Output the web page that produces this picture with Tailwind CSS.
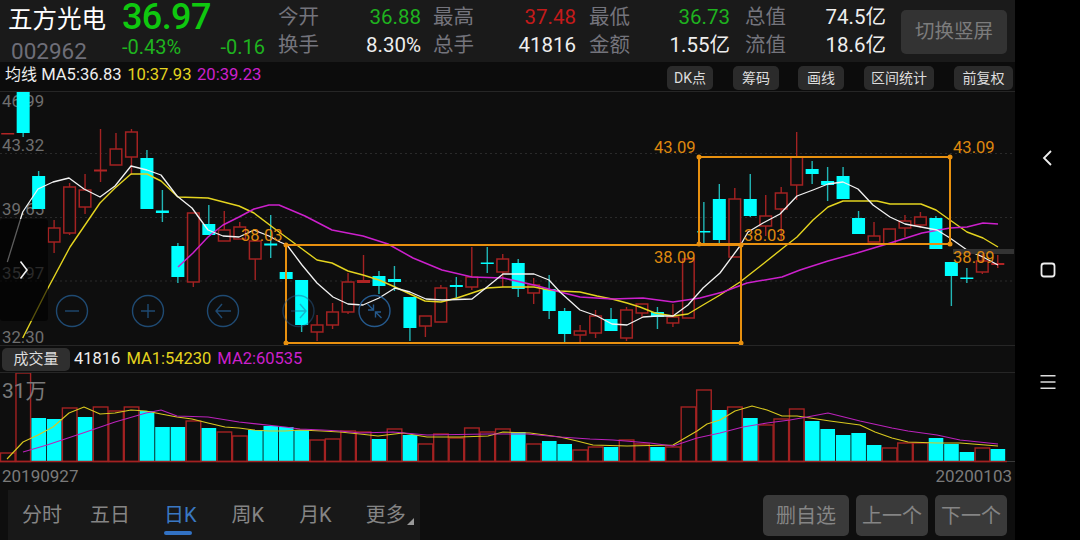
<!DOCTYPE html>
<html lang="zh">
<head>
<meta charset="utf-8">
<script src="https://cdn.jsdelivr.net/npm/@tailwindcss/browser@4"></script>
</head>
<body class="bg-black">
<div class="flex w-[1080px] h-[540px] overflow-hidden font-['Roboto','Noto_Sans_CJK_SC',sans-serif]">
  <main class="w-[1015px] h-full flex flex-col bg-[#0e0e0e]">
    <header class="h-[62px] shrink-0 bg-[#1a1a1a] flex text-[20.5px] leading-none">
      <div class="w-[110px] pl-[8px] pt-[7px]">
        <div class="text-[24.5px] leading-[26px] text-white whitespace-nowrap">五方光电</div>
        <div class="text-[22.5px] leading-[26px] mt-[5px] pl-[3px] text-[#6e6e78]">002962</div>
      </div>
      <div class="w-[158px] pl-[12px] text-[#12c012]">
        <div class="text-[36px] leading-[34px] font-medium tracking-[-0.6px] text-[#0fc80f]">36.97</div>
        <div class="flex justify-between w-[143px] mt-[3px] text-[20px] leading-[20px] text-[#1fb31f]"><span>-0.43%</span><span>-0.16</span></div>
      </div>
      <div class="w-[143px] ml-[10px] pt-[7px] grid grid-cols-[auto_1fr] auto-rows-[28px] text-right">
        <span class="text-left text-[#74747c]">今开</span><span class="text-[#1fb31f]">36.88</span>
        <span class="text-left text-[#74747c]">换手</span><span class="text-[#eeeeee]">8.30%</span>
      </div>
      <div class="w-[143px] ml-[12px] pt-[7px] grid grid-cols-[auto_1fr] auto-rows-[28px] text-right">
        <span class="text-left text-[#74747c]">最高</span><span class="text-[#c41a1a]">37.48</span>
        <span class="text-left text-[#74747c]">总手</span><span class="text-[#eeeeee]">41816</span>
      </div>
      <div class="w-[141px] ml-[13px] pt-[7px] grid grid-cols-[auto_1fr] auto-rows-[28px] text-right">
        <span class="text-left text-[#74747c]">最低</span><span class="text-[#1fb31f]">36.73</span>
        <span class="text-left text-[#74747c]">金额</span><span class="text-[#eeeeee]">1.55亿</span>
      </div>
      <div class="w-[141px] ml-[15px] pt-[7px] grid grid-cols-[auto_1fr] auto-rows-[28px] text-right">
        <span class="text-left text-[#74747c]">总值</span><span class="text-[#eeeeee]">74.5亿</span>
        <span class="text-left text-[#74747c]">流值</span><span class="text-[#eeeeee]">18.6亿</span>
      </div>
      <div class="w-[106px] h-[44px] mt-[10px] ml-[15px] rounded-[5px] bg-[#333333] text-[#7c7c7c] flex items-center justify-center text-[19.5px]">切换竖屏</div>
    </header>
    <div class="h-[30px] shrink-0 flex items-start justify-between border-b border-[#262626] bg-[#0c0c0c] pl-[5px] pr-[2px] text-[16.6px]">
      <div class="flex gap-[5.5px] leading-[22px] pt-[2px] whitespace-nowrap"><span class="text-[#eeeeee]"><span class="text-[16px]">均线</span> MA5:36.83</span><span class="text-[#e4d41f]">10:37.93</span><span class="text-[#cc20cc]">20:39.23</span></div>
      <div class="flex pt-[4px] text-[14px] text-[#dddddd]">
        <span class="w-[46px] h-[24px] ml-0 rounded-[5px] bg-[#2b2b2b] flex items-center justify-center">DK点</span>
        <span class="w-[46px] h-[24px] ml-[20px] rounded-[5px] bg-[#2b2b2b] flex items-center justify-center">筹码</span>
        <span class="w-[46px] h-[24px] ml-[19px] rounded-[5px] bg-[#2b2b2b] flex items-center justify-center">画线</span>
        <span class="w-[70px] h-[24px] ml-[20px] rounded-[5px] bg-[#2b2b2b] flex items-center justify-center">区间统计</span>
        <span class="w-[59px] h-[24px] ml-[20px] rounded-[5px] bg-[#2b2b2b] flex items-center justify-center">前复权</span>
      </div>
    </div>
    <svg id="k" class="block w-[1015px] h-[253px] shrink-0 overflow-visible" viewBox="0 92 1015 253" xmlns="http://www.w3.org/2000/svg"></svg>
    <div class="h-[28px] shrink-0 flex items-center gap-[6px] border-t border-b border-[#262626] bg-[#0e0e0e] pl-[2px] text-[16.5px] whitespace-nowrap">
      <span class="w-[68px] h-[23px] mr-[-2px] rounded-[5px] bg-[#2f2f2f] text-[#dddddd] text-[15px] flex items-center justify-center">成交量</span>
      <span class="text-[#eeeeee]">41816</span><span class="text-[#e4d41f]">MA1:54230</span><span class="text-[#cc20cc]">MA2:60535</span>
    </div>
    <svg id="v" class="block w-[1015px] h-[90px] shrink-0" viewBox="0 373 1015 90" xmlns="http://www.w3.org/2000/svg"></svg>
    <div class="h-[27px] shrink-0 flex items-center justify-between pl-[2px] pr-[3px] text-[17px] text-[#7a7a7a]"><span>20190927</span><span>20200103</span></div>
    <div class="h-[50px] shrink-0 flex justify-between text-[20px] text-[#858585]">
      <nav class="relative ml-[8px] w-[412px] h-full bg-[#181818] flex items-center">
        <span class="ml-[14px]">分时</span>
        <span class="ml-[28px]">五日</span>
        <span class="relative ml-[34px] text-[#3a78c3]">日K<i class="absolute left-0 top-[31px] w-[28px] h-[4px] rounded-full bg-[#3272c4]"></i></span>
        <span class="ml-[35px]">周K</span>
        <span class="ml-[35px]">月K</span>
        <span class="relative ml-[34px]">更多<svg class="absolute left-[41px] top-[18px] w-[7px] h-[7px]" viewBox="0 0 7 7"><path d="M7 0V7H0Z" fill="#999999"/></svg></span>
      </nav>
      <div class="flex gap-[7px] pt-[5px] pr-[8px]">
        <span class="w-[86px] h-[41px] rounded-[5px] bg-[#3a3a3a] flex items-center justify-center">删自选</span>
        <span class="w-[72px] h-[41px] rounded-[5px] bg-[#3a3a3a] flex items-center justify-center">上一个</span>
        <span class="w-[72px] h-[41px] rounded-[5px] bg-[#3a3a3a] flex items-center justify-center">下一个</span>
      </div>
    </div>
  </main>
  <aside class="w-[65px] h-full bg-black flex flex-col items-center justify-center gap-[92px]">
    <svg class="w-[20px] h-[20px]" viewBox="0 0 20 20"><path d="M13 3 6 10l7 7" fill="none" stroke="#eeeeee" stroke-width="1.8"/></svg>
    <svg class="w-[20px] h-[20px]" viewBox="0 0 20 20"><rect x="3.5" y="3.5" width="13" height="13" rx="2.5" fill="none" stroke="#eeeeee" stroke-width="1.8"/></svg>
    <svg class="w-[20px] h-[20px]" viewBox="0 0 20 20"><path d="M2.5 3.7h15M2.5 10h15M2.5 16.300h15" fill="none" stroke="#dddddd" stroke-width="1.6"/></svg>
  </aside>
</div>
<script>
const X=i=>7.7+15.47*i, R='#a32222', C='#00ffff', BG='#0e0e0e';
const K=[
['r',133,134.5,133,134.5],['c',92,133,92,137],['c',176,209,171,209],['r',228,242,220,253],['r',187,233,183,235],['r',190,207,174,214],['r',169.5,171.5,129,182],['r',149,165,133,165],['r',132,157,129,175],['c',158,209,150,209],
['c',210.5,213,190,222],['c',246,277,243,283],['r',213,282,213,287],['c',224,235,205,235],['r',230,241,211,241],['r',227,239,222,239],['r',241,259,241,280],['c',243.5,245.5,215,258],['c',272,279,266,279],['c',280,325,280,332],
['r',325,332,315,341],['r',312,325,303,329],['r',282,312,273,314],['r',280,283,255,283],['c',276,286,271,294],['c',279,282,266,291],['c',297,328,297,341],['r',316,326,316,337],['r',288,322,285,322],['c',285,287,277,298],
['r',277,287,247,290],['c',262.5,264,247,273],['r',259,272,254,287],['c',263,289,259,297],['r',285,293,278,304],['c',289,311,275,319],['c',311,334,308,343],['r',331,335,325,342],['r',316,333,310,338],['c',319,331,308,331],
['r',310,338,307,341],['r',304,313,304,318],['c',312,317,307,329],['r',317,323,304,327],['r',259,318,259,318],['c',231,232.5,202,244],['c',199,240,184,243],['r',199,257,188,257],['c',199,216,174,217],['r',216,226,195,236],
['r',193,209,187,240],['r',157,185,132,200],['c',169,174,161,184],['c',181,185,167,201],['c',176,199,167,199],['c',218,234,211,234],['r',236,242,222,242],['r',229,244,229,244],['r',221,228,215,237],['r',217,225,212,228],
['c',218,249,216,249],['c',262,276,262,306],['c',277.5,279,268,283],['r',261,272,252,274],['r',263,265,255,268]];
const V=[['r',453],['r',373],['c',418],['c',419],['r',408],['c',417],['r',407],['r',411],['r',407],['c',411],['c',427],['c',427],['r',421],['c',428],['r',432],['r',436],['c',430],['c',426],['c',427],['c',430],['r',440],['r',439],['r',431],['r',432],['c',439],['r',429],['c',435],['r',444],['r',434],['r',438],['r',428],['r',432],['r',429],['c',432],['r',444],['c',441],['c',444],['r',450],['r',447],['c',447],['r',440],['r',444],['c',447],['r',447],['r',407],['r',390],['c',410],['r',407],['c',418],['r',425],['r',419],['r',409],['c',421],['c',429],['c',435],['c',433],['c',445],['r',448],['r',443],['r',443],['c',438],['c',444],['c',452],['r',448],['c',449]];
const poly=(p,c,w)=>`<polyline points="${p}" fill="none" stroke="${c}" stroke-width="${w}" stroke-linejoin="round"/>`;
const yellow='22.7,338 47,290 70,247 85,225 100,203 115,188 131,174 147,174 161,181 178,197 208,198 239,206 254,213 279,232 290,240 317,260 332,263 348,271 363,275 379,280 395,287 410,294 425,301 441,302 457,298 472,293 487,288 503,287 518,287 534,287 549,290 560,291 580,292 597,296 612,299 627,303 640,307 655,313 673,316 688,314 703,305 720,295 740,282 763,264 783,248 797,237 813,220 828,207 843,201 860,201 877,201 890,204 921,204 936,210 950,220 967,232 983,238 998,247';
const white='7.3,262 22.7,212 38,189 53,182 69,178 84,189 100,197 115,186 131,166 147,170 161,175 177,196 192,208 208,230 223,236 239,237 254,230 269,236 280,242 287,245 302,265 317,283 333,297 348,304 363,305 379,298 395,288 410,292 426,299 442,300 472,299 487,287 503,274 534,274 549,280 560,292 580,310 597,316 612,324 627,325 643,317 657,316 673,316 688,305 703,288 720,273 740,246 748,232 763,223 780,214 797,196 813,190 828,184 843,182 858,189 873,205 890,217 905,224 921,227 937,230 950,238 967,250 983,257 998,265';
const mag='178,267 193,253 208,237 223,225 239,217 254,209 269,205 279,205 305,216 332,230 363,236 388,244 413,258 442,270 472,277 503,278 534,285 560,292 580,297 612,299 643,298 673,302 700,298 723,292 747,283 782,277 800,270 828,261 857,253 887,244 922,233 950,228 967,227 983,223 998,224';
let s='';
for(const y of [153.5,217.5,281]) s+=`<line x1="0" x2="1015" y1="${y}" y2="${y}" stroke="#2a2a2a" stroke-dasharray="2 3"/>`;
for(const [t,y] of [['46.99',107],['43.32',151],['39.65',215],['35.97',279],['32.30',343]]) s+=`<text x="2" y="${y}" font-size="16.8" fill="#6f6f6f">${t}</text>`;
K.forEach((k,i)=>{const x=X(i),[t,a,b,h,l]=k;
 if(h<a||l>b)s+=`<line x1="${x}" x2="${x}" y1="${h}" y2="${l}" stroke="${t=='r'?R:'#22b6b6'}" stroke-width="1.4"/>`;
 if(b-a<4) s+=`<rect x="${x-6.5}" y="${a}" width="13" height="${b-a}" fill="${t=='r'?'#b02424':C}"/>`;
 else if(t=='r') s+=`<rect x="${x-5.8}" y="${a}" width="11.6" height="${b-a}" fill="${BG}" stroke="${R}" stroke-width="1.5"/>`;
 else s+=`<rect x="${x-6.5}" y="${a}" width="13" height="${b-a}" fill="${C}"/>`;});
s+=poly(yellow,'#e4d41f',1.4)+poly(mag,'#cc20cc',1.5)+poly(white,'#f2f2f2',1.3);
s+=`<rect x="953" y="249" width="61" height="5" fill="#333333"/>`;
const O='#e8900f';
s+=`<path d="M286 343V245H741V343ZM699 244V157H950V244Z" fill="none" stroke="${O}" stroke-width="2"/>`;
for(const [x,y] of [[286,245],[741,245],[286,343],[741,343],[699,157],[950,157],[699,244],[950,244]]) s+=`<circle cx="${x}" cy="${y}" r="2.5" fill="${O}"/>`;
for(const [t,x,y] of [['38.03',241,241],['38.09',654,263],['43.09',654,153],['43.09',953,153],['38.03',744,241],['38.09',953,263]]) s+=`<text x="${x}" y="${y}" font-size="16.6" fill="${O}" opacity=".95">${t}</text>`;
s+=`<rect x="0" y="219" width="48" height="102" rx="3" fill="#000000" opacity=".62"/><path d="M20.5 261.5 27 270l-6.5 8.500" fill="none" stroke="#f0f0f0" stroke-width="1.6"/>`;
const B='#1f4a72';
const circ=(x,d,c=B,o=1)=>`<g opacity="${o}"><circle cx="${x}" cy="311" r="15.500" fill="none" stroke="${c}" stroke-width="1.4"/><path d="${d}" fill="none" stroke="${c}" stroke-width="1.4"/></g>`;
s+=circ(72,'M65 311h14')+circ(148,'M141 311h14M148 304v14')+circ(223,'M216 311h15M222 304l-6 7 6 7')+circ(298.5,'M291 311h15M300 304l6 7-6 7','#2a5f94',.45)+circ(374.5,'M367.500 304l6 6M373.500 304.500v5.500h-5.500M381.500 318l-6-6M375.500 317.500v-5.500h5.500','#25598c');
document.getElementById('k').innerHTML=s;
let v='';
V.forEach((b,i)=>{const x=15.47*i+.5,[t,y]=b;
 if(t=='c')v+=`<rect x="${x}" y="${y}" width="14.6" height="${461.5-y}" fill="${C}"/>`;
 else v+=`<rect x="${x}" y="${y}" width="14.6" height="${461.5-y}" fill="${BG}" stroke="${R}" stroke-width="1.400"/>`;});
v+=`<line x1="0" x2="1007" y1="461.500" y2="461.500" stroke="${R}" stroke-width="1.400"/><line x1="1007" x2="1015" y1="461.500" y2="461.500" stroke="#3a3a3a"/>`;
v+=`<text x="2" y="398" font-size="21" fill="#7a7a7a">31万</text>`;
v+=poly('7,459 23,442 38,435 53,427 69,413 84,407 100,414 115,413 131,410 146,411 161,414 177,417 192,419 208,423 225,427 239,428 254,430 269,431 285,431 300,430 322,431 340,432 360,434 378,436 403,433 427,437 460,437 488,436 503,432 530,433 560,437 577,441 593,445 627,446 673,445 697,431 707,424 720,420 735,411 752,406 767,410 782,416 797,416 830,421 860,425 875,432 892,438 908,442 937,443 960,443 998,446','#d9c81f',1.1);
v+=poly('23,452 47,445 83,433 115,422 146,413 161,410 177,416 208,417 239,422 285,427 300,429 322,430 340,431 360,433 393,432 427,435 488,434 527,434 560,437 590,439 613,440 650,443 673,446 697,438 720,433 743,427 767,423 790,420 807,417 828,413 860,421 892,428 908,431 937,435 960,440 998,444','#bb22bb',1.1);
document.getElementById('v').innerHTML=v;
</script>
</body>
</html>
